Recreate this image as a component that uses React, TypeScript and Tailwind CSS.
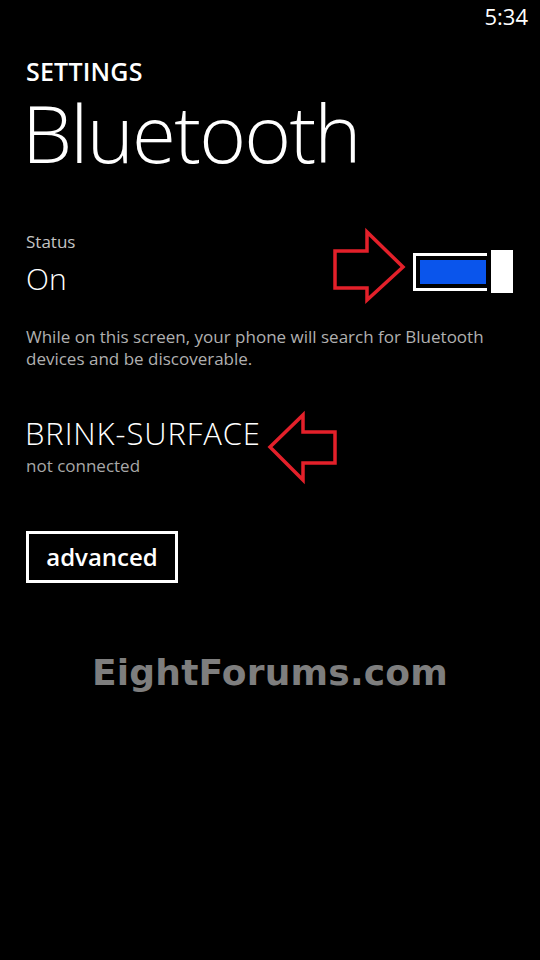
import React from "react";

const segoe = { fontFamily: '"Open Sans", "Noto Sans", sans-serif' };

const Toggle: React.FC = () => {
  return (
    <div className="relative mt-[18px] h-[43px] w-[100px]">
      <div className="absolute left-0 top-[3px] h-[38px] w-[80px] border-[3px] border-white p-[4px]">
        <div className="h-full w-full bg-[#0a55ec]" />
      </div>
      <div className="absolute right-0 top-0 h-[43px] w-[26px] border-l-[4px] border-black bg-white" />
    </div>
  );
};

const Arrows: React.FC = () => {
  return (
    <svg
      className="pointer-events-none absolute left-0 top-0"
      width={540}
      height={960}
      viewBox="0 0 540 960"
    >
      <polygon
        points="335,251 367,251 367,232 403,267 367,300 367,288 335,288"
        fill="none"
        stroke="#e3202a"
        strokeWidth={3.5}
        strokeLinejoin="miter"
      />
      <polygon
        points="270,447 303,415 303,432 335,432 335,463 303,463 303,480"
        fill="none"
        stroke="#e3202a"
        strokeWidth={3.5}
        strokeLinejoin="miter"
      />
    </svg>
  );
};

export default function App() {
  return (
    <div className="relative h-[960px] w-[540px] overflow-hidden bg-black text-white" style={segoe}>
      <div className="flex justify-end pr-[12px] pt-[5px]">
        <span className="text-[22px] leading-[22px]">5:34</span>
      </div>

      <div className="px-[26px]">
        <div className="mt-[32px] text-[25px] font-semibold leading-[25px] tracking-[0.2px]">SETTINGS</div>
        <h1 className="-ml-[4px] mt-[11px] text-[80px] font-light leading-[74px] tracking-[-1.8px]">Bluetooth</h1>

        <div className="mt-[63px] flex items-start justify-between pr-px">
          <div>
            <div className="text-[17px] leading-[20px] text-[#c4c4c4]">Status</div>
            <div className="mt-[11px] text-[30px] font-light leading-[32px]">On</div>
          </div>
          <Toggle />
        </div>

        <p className="mt-[31px] text-[17px] leading-[22px] text-[#b0b0b0]">
          While on this screen, your phone will search for Bluetooth
          <br />
          devices and be discoverable.
        </p>

        <div className="-ml-px mt-[48px] text-[31px] font-light leading-[30px] tracking-[0.9px]">BRINK-SURFACE</div>
        <div className="mt-[8px] text-[17px] leading-[20px] text-[#a8a8a8]">not connected</div>

        <button className="mt-[55px] flex h-[52px] w-[152px] items-center justify-center border-[3px] border-white text-[24px] font-semibold leading-none">
          advanced
        </button>
      </div>

      <div
        className="mt-[72px] text-center text-[36px] font-bold leading-[36px] tracking-[0.2px] text-[#7e7e7e]"
        style={{ fontFamily: '"DejaVu Sans", Verdana, sans-serif' }}
      >
        EightForums.com
      </div>

      <Arrows />
    </div>
  );
}
